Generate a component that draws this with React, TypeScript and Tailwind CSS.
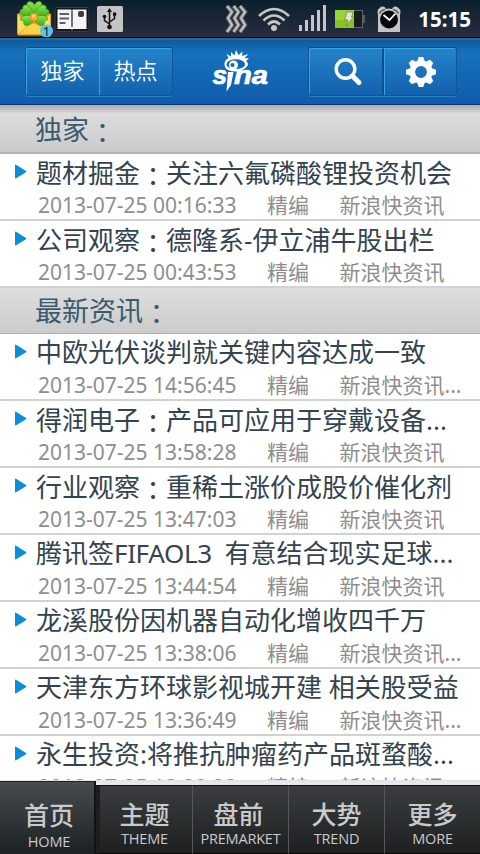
import React from 'react';

interface NewsItem {
    title: string;
    time: string;
    source: string;
}

const EXCLUSIVE: NewsItem[] = [
    { title: '题材掘金：关注六氟磷酸锂投资机会', time: '2013-07-25 00:16:33', source: '新浪快资讯' },
    { title: '公司观察：德隆系-伊立浦牛股出栏', time: '2013-07-25 00:43:53', source: '新浪快资讯' },
];

const LATEST: NewsItem[] = [
    { title: '中欧光伏谈判就关键内容达成一致', time: '2013-07-25 14:56:45', source: '新浪快资讯...' },
    { title: '得润电子：产品可应用于穿戴设备...', time: '2013-07-25 13:58:28', source: '新浪快资讯' },
    { title: '行业观察：重稀土涨价成股价催化剂', time: '2013-07-25 13:47:03', source: '新浪快资讯' },
    { title: '腾讯签FIFAOL3  有意结合现实足球...', time: '2013-07-25 13:44:54', source: '新浪快资讯' },
    { title: '龙溪股份因机器自动化增收四千万', time: '2013-07-25 13:38:06', source: '新浪快资讯...' },
    { title: '天津东方环球影视城开建 相关股受益', time: '2013-07-25 13:36:49', source: '新浪快资讯...' },
    { title: '永生投资:将推抗肿瘤药产品斑蝥酸...', time: '2013-07-25 13:28:23', source: '新浪快资讯' },
];

const TABS = [
    { cn: '首页', en: 'HOME' },
    { cn: '主题', en: 'THEME' },
    { cn: '盘前', en: 'PREMARKET' },
    { cn: '大势', en: 'TREND' },
    { cn: '更多', en: 'MORE' },
];

// Full-width colons come from the TC face and are nudged onto the baseline,
// runs of Latin capitals are set a little tighter
const renderText = (text: string) =>
    text.split(/(：|[A-Z0-9]{4,} +)/).map((part, i) => {
        if (part === '：') {
            return <span key={i} className="relative top-[3px] font-['Noto_Sans_CJK_TC',sans-serif]">：</span>;
        }
        if (/^[A-Z]/.test(part)) {
            return <span key={i} className="tracking-[-0.35px]">{part}</span>;
        }
        return part;
    });

const MailIcon = () => (
    <svg width="38" height="37" viewBox="0 0 38 37" className="shrink-0">
        <defs>
            <linearGradient id="leaf" x1="0" y1="0" x2="0" y2="1">
                <stop offset="0" stopColor="#8be84a" />
                <stop offset="1" stopColor="#3fa61c" />
            </linearGradient>
        </defs>
        <path d="M1 14 L6 12 H30 L35 14 V33.500 Q35 35.500 33 35.500 H3 Q1 35.500 1 33.500Z" fill="#e3a21d" />
        <path d="M2 15 L18 29 L34 15 V33 H2Z" fill="#ffdc5c" />
        <path d="M2 34.500 L14 24.500 Q18 22 22 24.500 L34 34.500Z" fill="#ffd04a" stroke="#e9a020" strokeWidth=".8" />
        <g fill="url(#leaf)" stroke="#3c9a1a" strokeWidth=".7">
            <path d="M18 17 C9 13 9 1 14 1.500 Q17.500 2 18.500 5 Q20 1 24 1.500 C28 3 26 13 18 17Z" />
            <path d="M18 17 C11 18 3 15 4 11 Q4.500 9 7 9 Q6 5 10 5 C14 6 17 11 18 17Z" />
            <path d="M18 17 C25 18 34 15 33 11 Q32.500 9 30 9 Q31 5 27 5 C22 6 19 11 18 17Z" />
            <path d="M18 17 C17 25 10 27 8 24.500 Q7 22.500 8.500 21 Q4 21 4.500 18 C7 14.500 14 15 18 17Z" />
            <path d="M18 17 C19 25 26 27 28 24.500 Q29 22.500 27.500 21 Q32 21 31.500 18 C29 14.500 22 15 18 17Z" />
        </g>
        <circle cx="18" cy="17" r="4" fill="#ffae2b" stroke="#d98412" strokeWidth=".8" />
        <circle cx="17.500" cy="16" r="1.500" fill="#ffd98a" />
        <circle cx="30.500" cy="31" r="6.500" fill="#5cc4e4" />
        <text x="30.500" y="35.500" textAnchor="middle" fontSize="13" fontFamily="Noto Sans, sans-serif" fill="#10202a">1</text>
    </svg>
);

const NewsIcon = () => (
    <svg width="35" height="26" viewBox="0 0 35 26" className="shrink-0">
        <rect x="1" y=".5" width="34" height="24" rx="1" fill="#17181a" stroke="#3a3d42" />
        <path d="M3.500 2.500 H17 L18 3.500 L19 2.500 H32.500 V22 H19 L18 23 L17 22 H3.500Z" fill="#f4f4f4" />
        <path d="M5.500 7 H15 M5.500 11.500 H15 M5.500 16 H11.500" stroke="#606165" strokeWidth="2.200" />
        <path d="M18 3.500 V20" stroke="#55565a" strokeWidth="1.600" />
        <rect x="24" y="4" width="6" height="6" rx="2" fill="#3c3d40" />
    </svg>
);

const UsbIcon = () => (
    <svg width="26" height="26" viewBox="0 0 26 26" className="shrink-0">
        <rect width="26" height="26" rx="1.500" fill="#c4c4c4" />
        <path d="M12.500 21 V5 M12.500 18 L7.500 14.500 V10 M12.500 16 L17.500 12.500 V8" stroke="#111" strokeWidth="1.500" fill="none" />
        <path d="M12.500 2 L15 6 H10Z" fill="#111" />
        <circle cx="12.500" cy="21" r="2.300" fill="#111" />
        <circle cx="7.500" cy="10.500" r="1.800" fill="#111" />
        <rect x="16" y="6.500" width="3.200" height="3.200" fill="#111" />
    </svg>
);

const VibrateIcon = () => (
    <svg width="23" height="28" viewBox="0 0 23 28" className="shrink-0">
        <g fill="none" stroke="#77797b" strokeWidth="4">
            <path d="M2 1 L7 7 L3 13 L7 20 L2 27" />
            <path d="M8.500 1 L13.500 7 L9.500 13 L13.500 20 L8.500 27" />
            <path d="M15 1 L20 7 L16 13 L20 20 L15 27" />
        </g>
        <g fill="none" stroke="#c6c6c6" strokeWidth="1.800">
            <path d="M2 1 L7 7 L3 13 L7 20 L2 27" />
            <path d="M8.500 1 L13.500 7 L9.500 13 L13.500 20 L8.500 27" />
            <path d="M15 1 L20 7 L16 13 L20 20 L15 27" />
        </g>
    </svg>
);

const WifiIcon = () => (
    <svg width="32" height="25" viewBox="0 0 32 25" className="shrink-0">
        <g fill="none" stroke="#c6c6c6" strokeWidth="2.600">
            <path d="M1 9 Q16 -5 31 9" />
            <path d="M5.500 13.500 Q16 3.500 26.500 13.500" />
            <path d="M10 17.500 Q16 11.500 22 17.500" />
        </g>
        <circle cx="16" cy="21" r="3" fill="#c6c6c6" />
    </svg>
);

const SignalIcon = () => (
    <svg width="28" height="26" viewBox="0 0 28 26" className="shrink-0">
        <path d="M0 20h3v6h-3z M6 15h3v11h-3z M12 10h3v16h-3z M18 5h3v21h-3z M24 0h3v26h-3z" fill="#c6c6c6" />
    </svg>
);

const BatteryIcon = () => (
    <svg width="31" height="18" viewBox="0 0 31 18" className="shrink-0">
        <rect x=".5" y=".5" width="27" height="17" fill="#191b1d" stroke="#626568" />
        <rect width="19" height="18" fill="#9bd233" />
        <rect y="10" width="19" height="8" fill="#87c329" />
        <rect x="28" y="5" width="2" height="8" fill="#55585b" />
        <path d="M12 2 H18 L16.500 7 H18.500 L11 16 L13 10 H9.500Z" fill="#e4e4e4" stroke="#58751e" strokeWidth=".6" />
    </svg>
);

const AlarmIcon = () => (
    <svg width="24" height="27" viewBox="0 0 24 27" className="shrink-0">
        <path d="M1 26 V9 Q-.5 4 3 1.500 Q7 -1 9 3 Q12 2 15 3 Q17 -1 21 1.500 Q24.500 4 23 9 V26Z" fill="#c4c4c4" />
        <path d="M2.500 7.500 Q4.500 4 8 3.500 M21.500 7.500 Q19.500 4 16 3.500" stroke="#46484b" strokeWidth="1.200" fill="none" />
        <circle cx="12" cy="13.500" r="9" fill="#060708" />
        <path d="M6.500 9 L12.500 14 L18.500 7.500" stroke="#fff" strokeWidth="1.800" fill="none" />
    </svg>
);

const SinaLogo = () => (
    <svg width="58" height="46" viewBox="0 0 58 46" className="shrink-0">
        <path
            d="M13.500 18 Q13 13.500 17.500 11 L15.500 7 L20 9.500 L20 5 L23.500 8.500 L25 3 L27.500 8 L31.500 4.500 L31 9 L37.500 7 L33.500 11 L38 11.500 L35 14 Q39 17 35 20.500 Q31 24.500 24 24.500 Q14 24 13.500 18Z"
            fill="#fff"
        />
        <ellipse cx="24.800" cy="17.200" rx="9.200" ry="4.900" fill="#1767b3" />
        <circle cx="22.500" cy="18" r="4.500" fill="#fff" />
        <circle cx="21.500" cy="18" r="2.100" fill="#1767b3" />
        <path d="M17 25 H22.500 L20 38 L15.500 44.500Z" fill="#fff" />
        <g fontFamily="Liberation Sans, sans-serif" fontWeight="bold" fontStyle="italic" fontSize="26" fill="#fff" stroke="#fff" strokeWidth=".7">
            <text x="1.500" y="37" textLength="14.500" lengthAdjust="spacingAndGlyphs">s</text>
            <text x="23" y="36.500" textLength="34" lengthAdjust="spacingAndGlyphs">na</text>
        </g>
    </svg>
);

const SearchIcon = () => (
    <svg width="30" height="30" viewBox="0 0 30 30">
        <circle cx="12.500" cy="12" r="9.300" fill="none" stroke="#fff" strokeWidth="3.400" />
        <path d="M19.500 19 L26 25.500" stroke="#fff" strokeWidth="5" strokeLinecap="round" />
    </svg>
);

const GearIcon = () => (
    <svg width="32" height="32" viewBox="-16 -16 32 32">
        <circle r="8.700" fill="none" stroke="#fff" strokeWidth="5.600" />
        {[0, 45, 90, 135, 180, 225, 270, 315].map(angle => (
            <path key={angle} d="M-4 -10 L-2.300 -15 H2.300 L4 -10Z" fill="#fff" transform={`rotate(${angle})`} />
        ))}
    </svg>
);

const StatusBar = () => (
    <div className="flex h-[38px] shrink-0 border-b border-black bg-linear-to-b from-[#08202c] to-[#292d40]">
        <div className="flex pl-4">
            <MailIcon />
            <div className="pt-[7px]"><NewsIcon /></div>
            <div className="pt-1.5 pl-2"><UsbIcon /></div>
        </div>
        <div className="ml-auto flex pr-[9px]">
            <div className="pt-[5px]"><VibrateIcon /></div>
            <div className="pt-[7px] pl-[10px]"><WifiIcon /></div>
            <div className="pt-[5px] pl-[9px]"><SignalIcon /></div>
            <div className="pt-[10px] pl-2"><BatteryIcon /></div>
            <div className="pt-1.5 pl-[11px]"><AlarmIcon /></div>
            <span className="w-[70px] pt-[7px] text-right text-[20.500px] leading-[25px] font-bold text-white">15:15</span>
        </div>
    </div>
);

const BUTTON = 'flex items-center justify-center bg-linear-to-b from-[#2583c9] to-[#1461ae]';
const BUTTON_GROUP = 'flex h-[49px] overflow-hidden rounded-[3px] border border-[#0e559a] border-t-[#0a4c87] shadow-[0_1px_0_#2580c7]';

const Header = () => (
    <div className="flex h-[67px] shrink-0 border-t-2 border-b border-t-[#187094] border-b-[#073c73] bg-linear-to-b from-[#12599a] via-[#1671bd] via-20% to-[#105baa] pt-[7px]">
        <div className={`${BUTTON_GROUP} ml-[25px] w-[148px]`}>
            <button className={`${BUTTON} w-[73px] border-t border-l border-[#37a4df] pr-px pb-1 text-[22px] font-[350] text-white`}>独家</button>
            <button className={`${BUTTON} w-[73px] border-t border-l border-[#37a4df] pr-px pb-1 text-[22px] font-[350] text-white`}>热点</button>
        </div>
        <div className="ml-[38px]"><SinaLogo /></div>
        <div className={`${BUTTON_GROUP} ml-[39px] w-[149px]`}>
            <button className={`${BUTTON} w-[75px] border-t border-r-2 border-l border-[#37a4df] border-r-[#0d4f91] pl-1`}><SearchIcon /></button>
            <button className={`${BUTTON} w-[72px] border-t border-l border-[#37a4df]`}><GearIcon /></button>
        </div>
    </div>
);

const NewsRow = ({ item }: { item: NewsItem }) => (
    <li className="flex h-[67px] shrink-0 border-b-2 border-[#d2d2d2] bg-white">
        <svg width="12" height="16" viewBox="0 0 12 16" className="mt-[10px] ml-[15px] shrink-0">
            <path d="M0 1.500 Q0 0 1.500 1 L11 7 Q12 7.500 11 8.200 L1.500 14 Q0 15 0 13.500Z" fill="#0a8dda" />
        </svg>
        <div className="pl-[9px] whitespace-pre">
            <div className="h-9 pt-px text-[26px] leading-[34px] text-[#33434f]">{renderText(item.title)}</div>
            <div className="flex pl-0.5 text-[21px] leading-[31px] text-[#8e8e8e]">
                <span className="w-[229px]">{item.time}</span>
                <span className="w-[72.500px]">精编</span>
                <span>{item.source}</span>
            </div>
        </div>
    </li>
);

const tabStyle = (index: number) => {
    if (index === 0) {
        return 'h-[73px] border-t border-r-2 border-t-[#202325] border-r-[#111314] from-[#474c4e] to-[#1d2123] pt-[17px] pl-1';
    }
    const base = 'h-[69px] border-t border-b border-t-[#111] border-b-[#0d0909] from-[#3b3e40] to-[#1d1f20] pt-3';
    return index === 1 ? `${base} border-l-4 border-l-[#1c1e20] pr-[3px]` : `${base} border-l border-l-[#56595b]`;
};

const TabBar = () => (
    <div className="flex h-[74px] shrink-0 items-end bg-linear-to-b from-[#dfe3e8] to-[#e8ebee] to-5%">
        {TABS.map((tab, i) => (
            <div key={tab.en} className={`flex w-24 flex-col items-center bg-linear-to-b text-[#cacaca] ${tabStyle(i)}`}>
                <span className={`text-[25px] leading-[32px] font-medium ${i === 2 ? 'pr-1' : ''}`}>{tab.cn}</span>
                <span className={`font-['Open_Sans',sans-serif] text-[14.500px] leading-[18px] tracking-[-0.2px] ${i === 0 ? 'pt-0.5' : ''}`}>{tab.en}</span>
            </div>
        ))}
    </div>
);

const App = () => {
    return (
        <div className="flex h-[854px] w-[480px] flex-col overflow-hidden bg-white font-['Noto_Sans','Noto_Sans_CJK_SC',sans-serif]">
            <StatusBar />
            <Header />
            <div className="flex min-h-0 flex-1 flex-col overflow-hidden">
                <h2 className="h-[49px] shrink-0 border-b-2 border-[#b4b4b4] bg-linear-to-b from-[#aaa9ab] via-[#dcdcdc] via-18% to-[#cbcbcb] pt-[7px] pl-[35px] text-[27px] leading-[34px] text-[#3a5a70]">
                    {renderText('独家：')}
                </h2>
                <ul className="flex shrink-0 flex-col">
                    {EXCLUSIVE.map(item => <NewsRow key={item.time} item={item} />)}
                </ul>
                <h2 className="h-[46px] shrink-0 border-b border-[#aeaeae] bg-linear-to-b from-[#dedede] to-[#cbcbcb] pt-[5px] pl-[35px] text-[27px] leading-[34px] text-[#3a5a70]">
                    {renderText('最新资讯：')}
                </h2>
                <ul className="flex shrink-0 flex-col">
                    {LATEST.map(item => <NewsRow key={item.time} item={item} />)}
                </ul>
            </div>
            <TabBar />
        </div>
    );
};

export default App;
